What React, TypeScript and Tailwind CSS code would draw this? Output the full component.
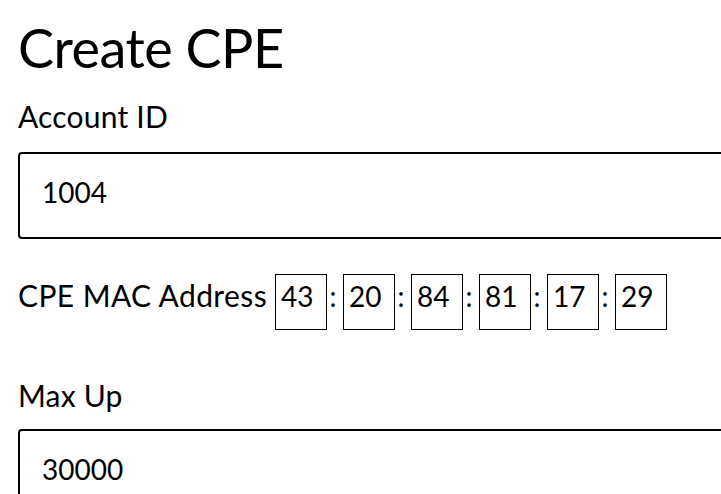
import React from "react";

const macParts = ["43", "20", "84", "81", "17", "29"];

const App = () => {
    return (
        <div className="h-[494px] w-full overflow-hidden bg-white pl-[18px] pt-[16px] font-['Lato',sans-serif] text-black">
            <h1 className="text-[54px] leading-[1.2] font-normal tracking-[-0.5px]">
                Create CPE
            </h1>

            <label className="mt-[17px] block text-[30px] leading-[1.2] tracking-[0.2px]">
                Account ID
            </label>
            <input
                readOnly
                defaultValue="1004"
                className="mt-[18px] block h-[87px] w-[760px] rounded-[4px] border-2 border-black pt-[21px] pb-[28px] pl-[22px] text-[28px] leading-[1.2] outline-none"
            />

            <div className="mt-[35px] flex items-baseline leading-[1.2]">
                <span className="mr-[8px] text-[30px] tracking-[0.4px]">CPE MAC Address</span>
                {macParts.map((part, i) => (
                    <React.Fragment key={i}>
                        <input
                            readOnly
                            defaultValue={part}
                            className="h-[56px] w-[52px] border border-black pt-[4px] pb-[16px] pl-[5px] text-[28px] leading-[1.2] outline-none"
                        />
                        {i < macParts.length - 1 && (
                            <span className="w-[16px] pr-[4px] text-center text-[28px]">:</span>
                        )}
                    </React.Fragment>
                ))}
            </div>

            <label className="mt-[47px] block text-[30px] leading-[1.2] tracking-[0.2px]">
                Max Up
            </label>
            <input
                readOnly
                defaultValue="30000"
                className="mt-[16px] block h-[87px] w-[760px] rounded-[4px] border-2 border-black pt-[21px] pb-[28px] pl-[22px] text-[28px] leading-[1.2] outline-none"
            />
        </div>
    );
};

export default App;
